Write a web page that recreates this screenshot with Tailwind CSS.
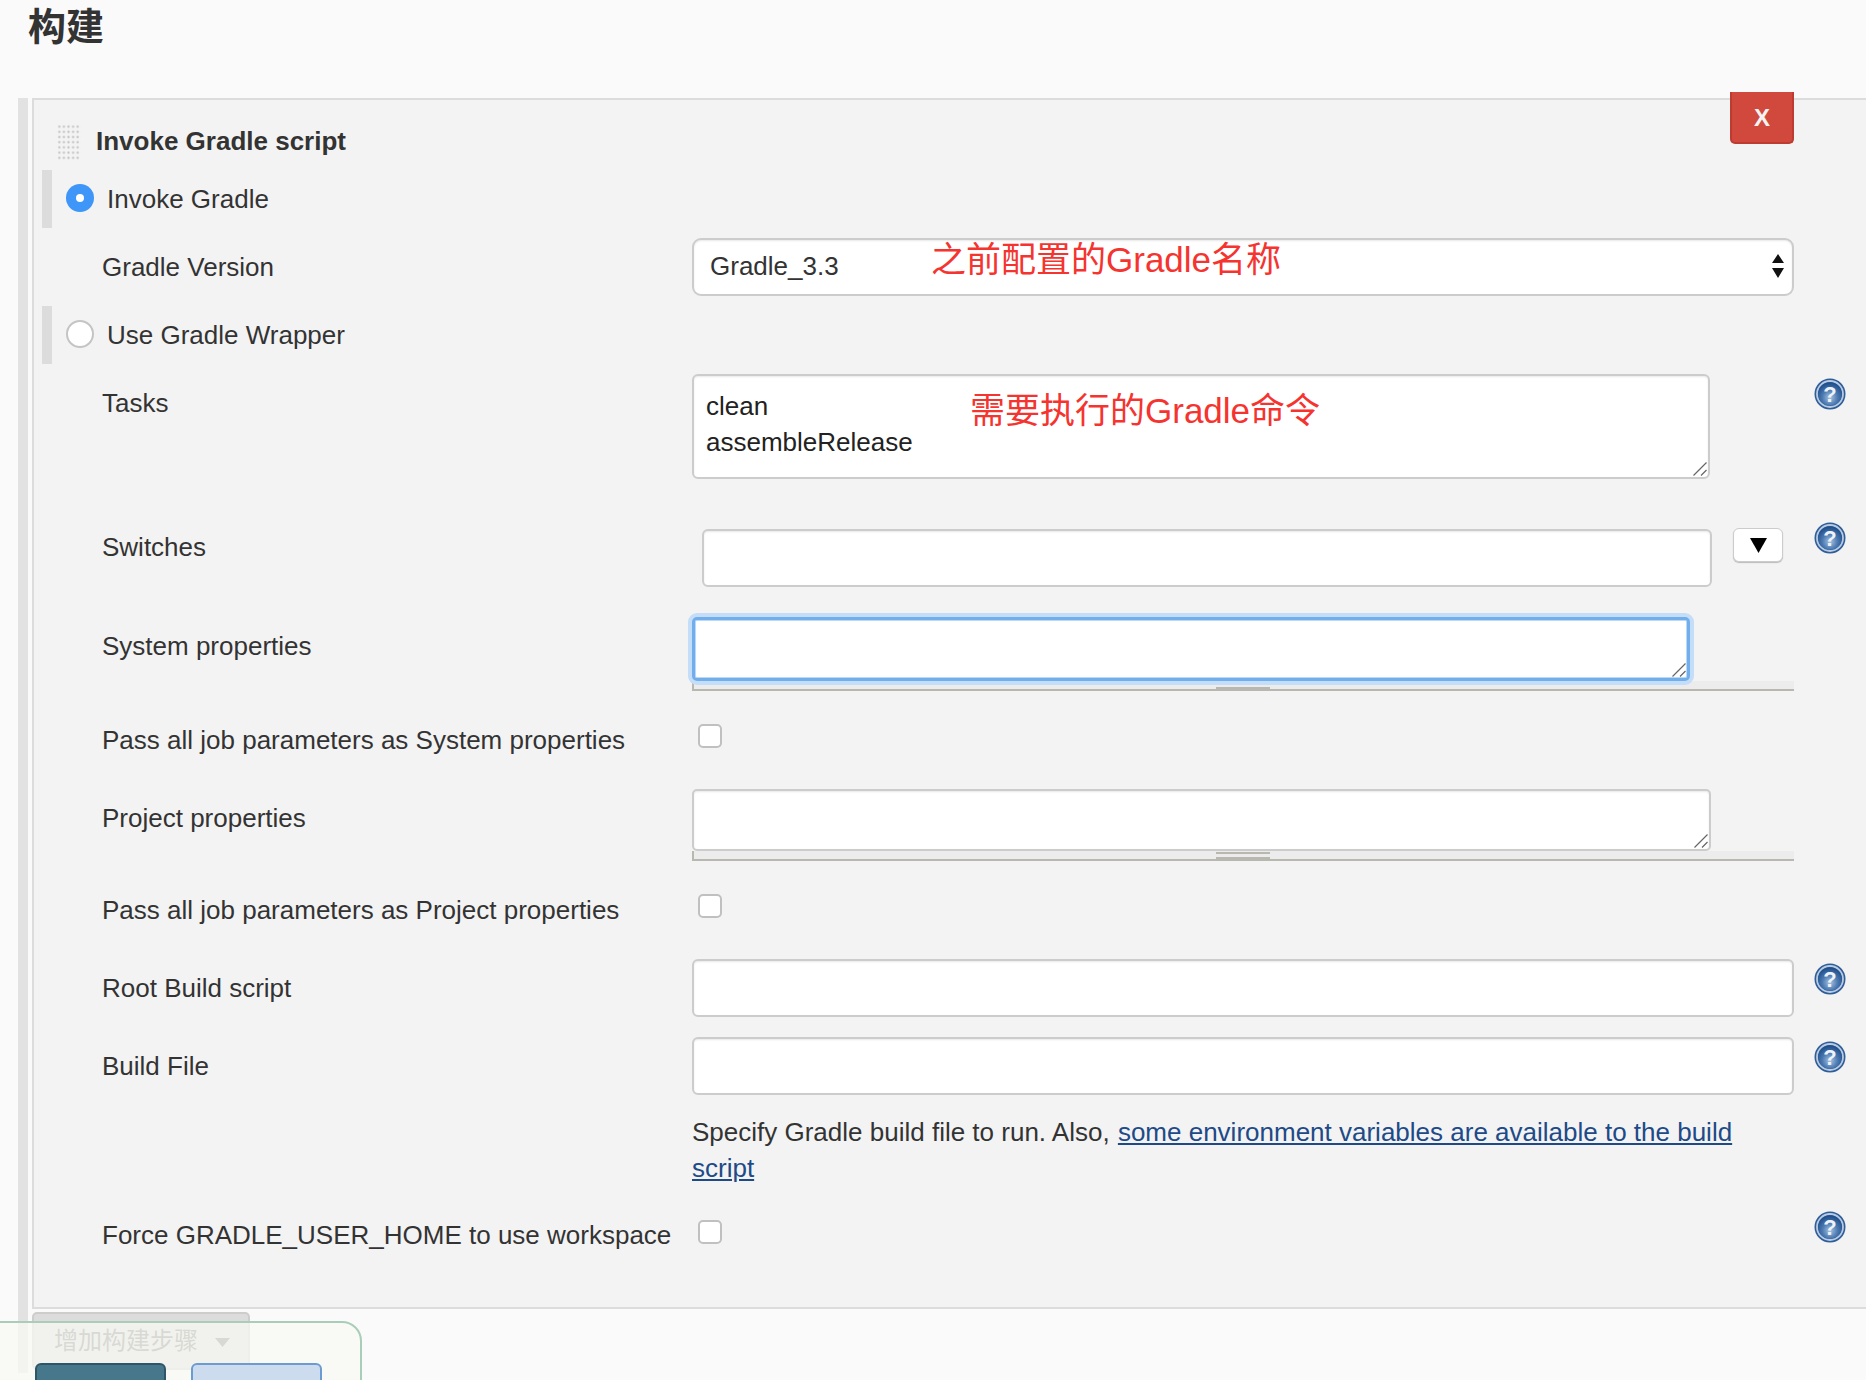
<!DOCTYPE html>
<html lang="zh-CN">
<head>
    <meta charset="UTF-8">
    <title>构建</title>
    <script src="https://cdn.jsdelivr.net/npm/@tailwindcss/browser@4"></script>
</head>
<body class="relative h-[1380px] overflow-hidden bg-[#fafafa] text-[26px] leading-[34px] text-[#333] font-['Liberation_Sans','Noto_Sans_CJK_SC',sans-serif]">
    <svg class="absolute h-0 w-0">
        <defs>
            <radialGradient id="help-fill" cx="50%" cy="65%" r="60%">
                <stop offset="0" stop-color="#a9c4e2"/>
                <stop offset="0.55" stop-color="#4a78b0"/>
                <stop offset="1" stop-color="#22508c"/>
            </radialGradient>
            <radialGradient id="dot-fill">
                <stop offset="0" stop-color="#b8b8b8"/>
                <stop offset="1" stop-color="#f0f0f0"/>
            </radialGradient>
            <pattern id="grip" width="4.6" height="5.2" patternUnits="userSpaceOnUse">
                <circle cx="2.300" cy="2.600" r="1.800" fill="url(#dot-fill)"/>
            </pattern>
        </defs>
        <symbol id="help" viewBox="0 0 32 32">
            <circle cx="16" cy="16" r="15.500" fill="#2f5d98"/>
            <circle cx="16" cy="16" r="13" fill="none" stroke="#b8cbe2" stroke-width="1.800"/>
            <circle cx="16" cy="16" r="11.800" fill="url(#help-fill)"/>
        </symbol>
        <symbol id="grabber" viewBox="0 0 14 14">
            <path d="M0.500 13.500 13.500 0.500M8 13.500 13.500 8" stroke="#666" stroke-width="1.200" fill="none"/>
        </symbol>
    </svg>

    <h1 class="h-[98px] pl-[28px] pt-[4px] text-[38px] leading-[46px] font-bold text-[#333]">构建</h1>

    <div class="flex pl-[18px]">
        <div class="h-[1275px] w-[10px] bg-[#e2e2e2]"></div>
        <div class="ml-[4px] flex-1">
            <div class="relative h-[1211px] border-y-2 border-l-2 border-[#dcdcdc] bg-[#f3f3f3]">
                <button class="absolute left-[1696px] top-[-8px] h-[52px] w-[64px] rounded-b-[5px] border-2 border-t-0 border-[#bd3b30] bg-[#d1493d] pt-[2px] text-[24px] font-bold text-[#f3f3f3]">X</button>

                <div class="flex h-[70px] items-center pl-[23px] pt-[12px]">
                    <svg width="24" height="37" class="mt-[2px] shrink-0"><rect width="24" height="37" fill="url(#grip)"/></svg>
                    <span class="ml-[15px] font-bold">Invoke Gradle script</span>
                </div>

                <div class="ml-[8px] flex h-[58px] items-center border-l-[10px] border-[#dcdcdc] pl-[14px]">
                    <span class="flex h-[28px] w-[28px] -translate-y-[1px] items-center justify-center rounded-full bg-[#3d96f8]"><span class="h-[8px] w-[8px] rounded-full bg-white"></span></span>
                    <span class="ml-[13px]">Invoke Gradle</span>
                </div>

                <div class="mt-[10px] flex h-[58px]">
                    <div class="w-[658px] pl-[68px] pt-[12px]">Gradle Version</div>
                    <div class="relative flex h-[58px] w-[1102px] items-center rounded-[9px] border-2 border-[#ccc] bg-white pb-[3px] pl-[16px] shadow-[inset_0_1px_2px_#e8e8e8]">
                        Gradle_3.3
                        <svg width="14" height="24" viewBox="0 0 14 24" class="absolute right-[7px] top-[14px]"><path d="M7 0 13 9H1ZM1 14H13L7 24Z" fill="#111"/></svg>
                    </div>
                </div>

                <div class="mt-[10px] ml-[8px] flex h-[58px] items-center border-l-[10px] border-[#dcdcdc] pl-[14px]">
                    <span class="h-[28px] w-[28px] -translate-y-[1px] rounded-full border-2 border-[#c4c4c4] bg-white"></span>
                    <span class="ml-[13px]">Use Gradle Wrapper</span>
                </div>

                <div class="mt-[10px] flex h-[105px]">
                    <div class="w-[658px] pl-[68px] pt-[12px]">Tasks</div>
                    <div class="relative h-[105px] w-[1018px]">
                        <textarea class="block h-[105px] w-full resize-none rounded-[6px] border-2 border-[#ccc] bg-white px-[12px] py-[12px] leading-[36px] text-[#222] shadow-[inset_0_1px_2px_#e8e8e8] outline-none">clean
assembleRelease</textarea>
                        <svg class="absolute bottom-[3px] right-[3px] h-[14px] w-[14px]"><use href="#grabber"/></svg>
                    </div>
                    <svg class="ml-auto mr-[20px] mt-[4px] h-[32px] w-[32px]"><use href="#help"/><text x="16" y="24" text-anchor="middle" font-weight="700" font-size="22" fill="#eef3f9">?</text></svg>
                </div>

                <div class="mt-[50px] flex h-[58px]">
                    <div class="w-[668px] pl-[68px] pt-[1px]">Switches</div>
                    <input class="h-[58px] w-[1010px] rounded-[6px] border-2 border-[#ccc] bg-white shadow-[inset_0_1px_2px_#e8e8e8] outline-none">
                    <button class="ml-[21px] flex h-[34px] w-[50px] -translate-y-[1px] items-center justify-center rounded-[6px] border border-[#ccc] bg-white shadow-[0_1px_1px_#bbb]">
                        <svg width="17" height="15" viewBox="0 0 17 15"><path d="M0 0H17L8.500 15Z" fill="#000"/></svg>
                    </button>
                    <svg class="ml-auto mr-[20px] -mt-[7px] h-[32px] w-[32px]"><use href="#help"/><text x="16" y="24" text-anchor="middle" font-weight="700" font-size="22" fill="#eef3f9">?</text></svg>
                </div>

                <div class="mt-[30px] flex">
                    <div class="w-[658px] pl-[68px] pt-[12px]">System properties</div>
                    <div class="relative w-[1102px]">
                        <div class="relative z-10 h-[64px] w-[998px]">
                            <textarea class="block h-[64px] w-full resize-none rounded-[5px] border-[3px] border-[#72aeeb] bg-white shadow-[0_0_0_4px_#c4ddf8,inset_0_0_0_1px_#bcd8f7] outline-none"></textarea>
                            <svg class="absolute bottom-[4px] right-[4px] h-[14px] w-[14px]"><use href="#grabber"/></svg>
                        </div>
                        <div class="relative h-[10px] border-b-2 border-l-2 border-[#b8b8b0] bg-[#ececec]">
                            <div class="absolute left-[522px] top-[1px] h-[7px] w-[54px] border-y-2 border-[#b8b8b0]"></div>
                        </div>
                    </div>
                </div>

                <div class="mt-[31px] flex h-[34px]">
                    <div class="w-[664px] pl-[68px] pt-[1px]">Pass all job parameters as System properties</div>
                    <span class="mt-[2px] h-[24px] w-[24px] rounded-[5px] border-2 border-[#c0c0c0] bg-white"></span>
                </div>

                <div class="mt-[33px] flex">
                    <div class="w-[658px] pl-[68px] pt-[12px]">Project properties</div>
                    <div class="w-[1102px]">
                        <div class="relative h-[62px] w-[1019px]">
                            <textarea class="block h-[62px] w-full resize-none rounded-[5px] border-2 border-[#ccc] bg-white shadow-[inset_0_1px_2px_#e8e8e8] outline-none"></textarea>
                            <svg class="absolute bottom-[3px] right-[3px] h-[14px] w-[14px]"><use href="#grabber"/></svg>
                        </div>
                        <div class="relative h-[10px] border-b-2 border-l-2 border-[#b8b8b0] bg-[#ececec]">
                            <div class="absolute left-[522px] top-[1px] h-[7px] w-[54px] border-y-2 border-[#b8b8b0]"></div>
                        </div>
                    </div>
                </div>

                <div class="mt-[31px] flex h-[34px]">
                    <div class="w-[664px] pl-[68px] pt-[1px]">Pass all job parameters as Project properties</div>
                    <span class="mt-[2px] h-[24px] w-[24px] rounded-[5px] border-2 border-[#c0c0c0] bg-white"></span>
                </div>

                <div class="mt-[33px] flex h-[58px]">
                    <div class="w-[658px] pl-[68px] pt-[12px]">Root Build script</div>
                    <input class="h-[58px] w-[1102px] rounded-[6px] border-2 border-[#ccc] bg-white shadow-[inset_0_1px_2px_#e8e8e8] outline-none">
                    <svg class="ml-auto mr-[20px] mt-[4px] h-[32px] w-[32px]"><use href="#help"/><text x="16" y="24" text-anchor="middle" font-weight="700" font-size="22" fill="#eef3f9">?</text></svg>
                </div>

                <div class="mt-[20px] flex h-[58px]">
                    <div class="w-[658px] pl-[68px] pt-[12px]">Build File</div>
                    <input class="h-[58px] w-[1102px] rounded-[6px] border-2 border-[#ccc] bg-white shadow-[inset_0_1px_2px_#e8e8e8] outline-none">
                    <svg class="ml-auto mr-[20px] mt-[4px] h-[32px] w-[32px]"><use href="#help"/><text x="16" y="24" text-anchor="middle" font-weight="700" font-size="22" fill="#eef3f9">?</text></svg>
                </div>

                <p class="ml-[658px] mt-[19px] w-[1102px] leading-[36px] text-[#333]">Specify Gradle build file to run. Also, <a href="#" class="ml-[1px] text-[#204a87] underline">some environment variables are available to the build script</a></p>

                <div class="mt-[32px] flex h-[34px]">
                    <div class="w-[664px] pl-[68px]">Force GRADLE_USER_HOME to use workspace</div>
                    <span class="mt-[2px] h-[24px] w-[24px] rounded-[5px] border-2 border-[#c0c0c0] bg-white"></span>
                    <svg class="ml-auto mr-[20px] -mt-[7px] h-[32px] w-[32px]"><use href="#help"/><text x="16" y="24" text-anchor="middle" font-weight="700" font-size="22" fill="#eef3f9">?</text></svg>
                </div>
            </div>

            <button class="mt-[3px] flex h-[58px] w-[218px] items-start rounded-[5px] border-2 border-[#cdcdcd] bg-[#dcdcdc] pl-[20px] pt-[10px] text-[24px] text-[#777]">
                增加构建步骤
                <svg width="15" height="9" viewBox="0 0 15 9" class="ml-[17px] mt-[14px]"><path d="M0 0H15L7.500 9Z" fill="#777"/></svg>
            </button>
        </div>
    </div>

    <!-- red annotations drawn on top of the screenshot -->
    <span class="absolute left-[931px] top-[237px] text-[35px] leading-[46px] text-[#f5332f]">之前配置的Gradle名称</span>
    <span class="absolute left-[970px] top-[388px] text-[35px] leading-[46px] text-[#f5332f]">需要执行的Gradle命令</span>

    <!-- floating save bar, cut off by the bottom edge -->
    <div class="absolute left-[-4px] top-[1321px] flex h-[80px] w-[366px] gap-[25px] rounded-tr-[20px] border-2 border-[#a9cdb8] bg-[#f8faf3]/75 pl-[37px] pt-[40px]">
        <div class="h-[40px] w-[131px] rounded-[6px] border-2 border-[#2f5568] bg-[#47778a]"></div>
        <div class="h-[40px] w-[131px] rounded-[6px] border-2 border-[#6b9bd0] bg-[#ccdcee]"></div>
    </div>
</body>
</html>
